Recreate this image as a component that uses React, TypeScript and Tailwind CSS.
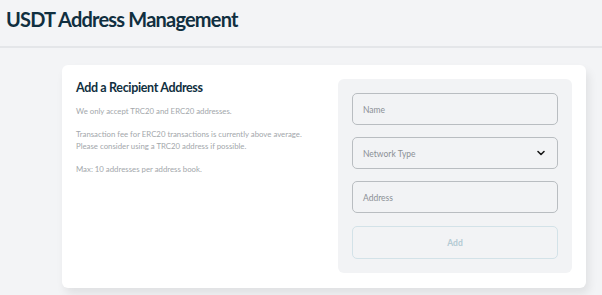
import React from 'react';
import { ChevronDown } from 'lucide-react';

const notes = [
  ['We only accept TRC20 and ERC20 addresses.'],
  [
    'Transaction fee for ERC20 transactions is currently above average.',
    'Please consider using a TRC20 address if possible.',
  ],
  ['Max: 10 addresses per address book.'],
];

function Field(props: { label: string; select?: boolean }) {
  return (
    <div className="flex h-[32px] items-center justify-between rounded-[5px] border border-[#b9bdc1] bg-[#f2f3f5] pl-[10px] pr-[10px] pt-[2px]">
      <span className="text-[8.5px] text-[#8b9095]">{props.label}</span>
      {props.select && <ChevronDown size={12} strokeWidth={3.2} className="-mt-[2px] text-[#1a1a1a]" />}
    </div>
  );
}

export default function App() {
  return (
    <div className="min-h-screen bg-[#f3f4f6] font-['Lato','Open_Sans',sans-serif]">
      <header className="h-[48px] border-b-2 border-[#e4e6e9] px-[6px] pt-[5px]">
        <h1 className="text-[20px] font-bold leading-[28px] tracking-[-0.8px] text-[#102f40]">
          USDT Address Management
        </h1>
      </header>
      <main className="pl-[62px] pr-[16px] pt-[17px]">
        <div className="flex h-[223px] w-[524px] justify-between rounded-[6px] bg-white p-[14px] pb-[15px] shadow-[3px_6px_10px_rgba(0,0,0,0.08)]">
          <div className="pt-[1px]">
            <h2 className="text-[12.5px] font-bold leading-[16px] tracking-[-0.35px] text-[#102f40]">
              Add a Recipient Address
            </h2>
            <div className="mt-[9px] flex flex-col gap-[10px]">
              {notes.map((block, i) => (
                <p key={i} className="text-[7.8px] leading-[12.5px] text-[#a3a7ab]">
                  {block.map((line) => (
                    <span key={line} className="block">
                      {line}
                    </span>
                  ))}
                </p>
              ))}
            </div>
          </div>
          <div className="flex w-[234px] flex-col gap-[12px] rounded-[6px] bg-[#f2f3f5] p-[14px] pb-[13px]">
            <Field label="Name" />
            <Field label="Network Type" select />
            <Field label="Address" />
            <button
              type="button"
              className="mt-[1px] h-[33px] rounded-[5px] border border-[#d3e2e8] pt-[2px] text-[8.5px] font-bold text-[#b3cad3]"
            >
              Add
            </button>
          </div>
        </div>
      </main>
    </div>
  );
}
